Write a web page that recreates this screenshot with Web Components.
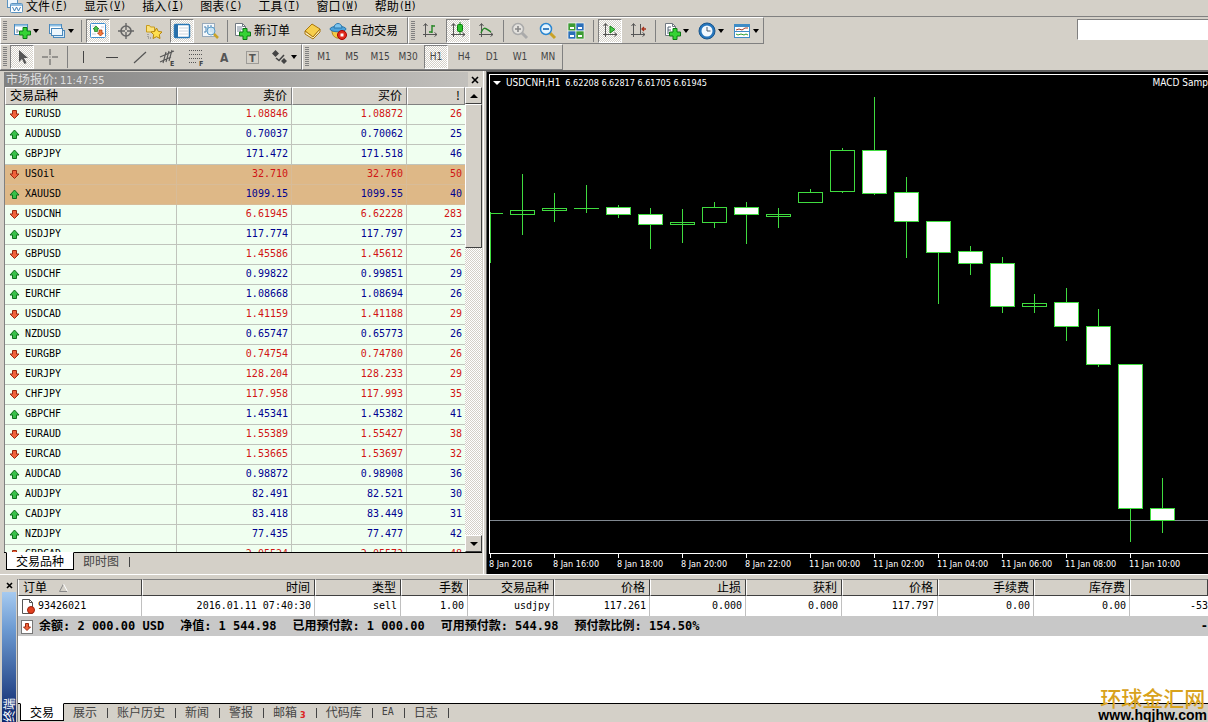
<!DOCTYPE html>
<html lang="zh-CN">
<head>
<meta charset="utf-8">
<title>交易终端</title>
<style>
  html, body { margin: 0; height: 100%; }
  body {
    --face: #d4d0c8; --shade: #808080; --dark: #404040; --light: #ffffff;
    --dither: repeating-conic-gradient(#ffffff 0 25%, #d4d0c8 0 50%) 0 0 / 2px 2px;
    --ui: "DejaVu Sans Condensed", "Noto Sans", "Noto Sans CJK SC", sans-serif;
    --mono: "DejaVu Sans Mono", "Noto Sans CJK SC", monospace;
    --cjk: "Noto Sans CJK SC", sans-serif;
    background: var(--face); color: #000; font: 12px/16px var(--cjk); overflow: hidden;
  }
</style>
</head>
<body>
<trade-app></trade-app>
<script>
const reset = `:host,*{box-sizing:border-box} button{font:inherit;color:inherit;background:none;border:0;padding:0;margin:0;white-space:nowrap}
 table{border-collapse:separate;border-spacing:0;table-layout:fixed;width:100%} th{font-weight:400} th,td{vertical-align:top}`;

const doc = '<path d="M2.5 1.5h7l3 3v9h-10z" fill="#fff" stroke="#707880"/><path d="M9.500 1.500v3h3" fill="none" stroke="#707880"/>';
const plus = (x, y) => `<path transform="translate(${x} ${y})" d="M4 .5h4v3.500h3.500v4H8v3.500H4V8H.5V4H4z" fill="#35d335" stroke="#0a7a12"/>`;
const axes = '<path d="M4.500 2v13M2 12.500h14M2.500 4l2-2.500 2 2.500M13.500 10.500l2.500 2-2.500 2" fill="none" stroke="#555"/>';
const glass = (c, s) => `<path d="M11 11l5 5" stroke="${c === '#aaa' ? '#aaa' : '#c9a227'}" stroke-width="3"/><circle cx="7" cy="7" r="5.500" fill="${c === '#aaa' ? '#e4e2de' : '#e6f5ff'}" stroke="${c}" stroke-width="1.500"/><path d="${s}" stroke="${c === '#aaa' ? '#888' : '#1565b0'}" stroke-width="1.600"/>`;
const ICONS = {
  app: '<rect x="1.500" y="-1.500" width="10" height="9" fill="#eef6fc" stroke="#5b93c0"/><rect x="4.500" y="3.500" width="12" height="9" rx="1" fill="#fff" stroke="#5b93c0"/><path d="M5 5h11" stroke="#8fbce0" stroke-width="2"/><path d="M6.500 7l2 4 2-4 2 4 2-4" fill="none" stroke="#3f7fb5"/>',
  newchart: '<rect x="1.500" y="2.500" width="13" height="10" fill="#fff" stroke="#4a88bb"/><path d="M2 3.500h12" stroke="#8fc0e4" stroke-width="2"/><path d="M4 7v4M4 9h2" stroke="#789"/>' + plus(6, 5),
  profiles: '<rect x="1.500" y="2.500" width="12" height="9" fill="#fff" stroke="#4a88bb"/><path d="M2 3.500h11" stroke="#8fc0e4" stroke-width="2"/><rect x="5.500" y="8.500" width="11" height="7" fill="#d9ecfa" stroke="#4a88bb"/><path d="M3 7h9" stroke="#9ab" /><rect x="3.500" y="6.500" width="11" height="7" fill="#eef7fd" stroke="#4a88bb"/>',
  market: '<rect x="1.500" y="1.500" width="15" height="14" rx="1" fill="#fff" stroke="#3f8fd0"/><path d="M3 4h4M3 12h4M12 5h3" stroke="#ccd" /><path d="M7 4l3 3H8.500v2.500h-3V7H4z" fill="#49c149" stroke="#167a16" stroke-width=".7"/><path d="M11.500 14l-3-3H10V8h3v3h1.500z" fill="#f47a3a" stroke="#a83208" stroke-width=".7"/>',
  target: '<circle cx="9" cy="9" r="5" fill="none" stroke="#666" stroke-width="1.600"/><path d="M9 1v7M9 10v7M1 9h7M10 9h7" stroke="#666" stroke-width="1.400"/>',
  navigator: '<path d="M1.500 3.500h3l1 1.500h4v5h-8z" fill="#fce27a" stroke="#c79b1c"/><path d="M3 12v4h4" fill="none" stroke="#777" stroke-dasharray="1 1"/><path d="M11.500 6l1.800 3.400 3.700.6-2.700 2.700.7 3.800-3.500-1.800L8 16.500l.7-3.800L6 10l3.700-.6z" fill="#ffdf4f" stroke="#b8860b"/>',
  terminal: '<rect x="1.500" y="2.500" width="15" height="13" rx="1" fill="#fff" stroke="#2877b5" stroke-width="1.500"/><path d="M3.500 3v12" stroke="#2a6fa8" stroke-width="3"/><path d="M6 6h9M6 9h9M6 12h9" stroke="#ccd4dc"/>',
  tester: '<rect x="1.500" y="1.500" width="12" height="13" fill="#f4f8fb" stroke="#9ab"/><path d="M3 5h2v5H3M7 3v8M10 3v7M12 5v7" fill="none" stroke="#4a84b4"/><circle cx="10" cy="9" r="4" fill="#d6ecfa" fill-opacity=".8" stroke="#5b9cc8"/><path d="M13 12l4 4" stroke="#c9a227" stroke-width="2.500"/>',
  neworder: doc + '<path d="M4 5h5M4 7h6M4 9h4" stroke="#789"/>' + plus(6, 6),
  book: '<path d="M2 9l7-7 8 5-7 8z" fill="#f7cf4d" stroke="#a9760c"/><path d="M2 9v3l8 5 7-7V7l-7 8z" fill="#fdf0bd" stroke="#a9760c"/>',
  auto: '<path d="M3 9c0 5 4 8 8 7l5-7z" fill="#f3ca45" stroke="#b0841b"/><ellipse cx="9" cy="7" rx="8" ry="2.800" fill="#4da3db" stroke="#2b78ad"/><path d="M5 6c0-6 8-6 8 0z" fill="#7cc4ee" stroke="#2b78ad"/><circle cx="13" cy="13" r="4.500" fill="#e02a1c" stroke="#a00"/><rect x="11.500" y="11.500" width="3" height="3" fill="#fff"/>',
  bars: axes + '<path d="M11 3v8M11 4h3M8 10h3" stroke="#268626" stroke-width="1.400"/>',
  candles: axes + '<path d="M11 0v12" stroke="#168c16"/><rect x="8.500" y="2.500" width="5" height="7" rx="1" fill="#2cc32c" stroke="#0d7d0d"/>',
  line: axes + '<path d="M4 11c3-8 5-4 10-1" fill="none" stroke="#268626" stroke-width="1.400"/>',
  zoomin: glass('#aaa', 'M4 7h6M7 4v6'),
  zoomout: glass('#2b86d0', 'M4 7h6'),
  tile: '<g stroke="#fff" stroke-width=".6"><rect x="1" y="1" width="8" height="8" fill="#3d9b33"/><rect x="9" y="1" width="8" height="8" fill="#2b6fb8"/><rect x="1" y="9" width="8" height="8" fill="#2b6fb8"/><rect x="9" y="9" width="8" height="8" fill="#3d9b33"/></g><path d="M3 5h4v2H3zM11 5h4v2h-4zM3 13h4v2H3zM11 13h4v2h-4z" fill="#fff"/>',
  scroll: axes + '<path d="M9 4l5 3.500L9 11z" fill="#48cc48" stroke="#168016"/>',
  shift: axes + '<path d="M11.500 2v11" stroke="#555"/><path d="M17 7h-4M15 5l-2 2 2 2" fill="none" stroke="#a8321c" stroke-width="1.300"/>',
  indicator: doc + '<path d="M5 12V5h3M5 8h3" fill="none" stroke="#567"/>' + plus(6, 6),
  clock: '<circle cx="9" cy="9" r="8" fill="#2676bd" stroke="#1a568c"/><circle cx="9" cy="9" r="5.500" fill="#f2f9ff"/><path d="M9 5v4h3.500" fill="none" stroke="#456"/>',
  template: '<rect x="1" y="2" width="16" height="14" fill="#3e8cc6"/><path d="M2 5h14v4H2zM2 10h14v5H2z" fill="#fff"/><path d="M3 8l3-1 3 1 3-2 3 0" fill="none" stroke="#a33b22"/><path d="M3 12l2 1 3-1 3 1 2-1 2 1" fill="none" stroke="#2d9b2d"/>',
  cursor: '<path d="M6 2v12l3-3 2.500 5 2-1-2.500-5h4z" fill="#555"/>',
  cross: '<path d="M9 1v6M9 11v6M1 9h6M11 9h6M9 8.500v1" stroke="#555"/>',
  vline: '<path d="M8.500 3v12" stroke="#444"/>',
  hline: '<path d="M3 9.500h12" stroke="#444"/>',
  trend: '<path d="M3 15L15 4" stroke="#555" stroke-width="1.200"/>',
  channel: '<path d="M1 9l14-6M1 14l11-5M4 15l3-11M7 14l3-11M10 13l3-11" stroke="#555" stroke-width="1.100"/><text x="11" y="18" font-size="7" font-weight="700" fill="#444">E</text>',
  fibo: '<path d="M2 2.500h14M2 6.500h14M2 10.500h14M2 14.500h8" stroke="#555" stroke-dasharray="1 1"/><text x="12" y="18" font-size="7" font-weight="700" fill="#444">F</text>',
  text: '<text x="5" y="14" font-size="12" font-weight="700" fill="#555">A</text>',
  label: '<rect x="3.500" y="3.500" width="12" height="12" fill="none" stroke="#666" stroke-dasharray="1 1"/><text x="6" y="14" font-size="11" font-weight="700" fill="#555">T</text>',
  arrows: '<path d="M4.500 2l3.500 3.500-3.500 3.500L1 5.500zM13 16l-3-3 3-3 3 3z" fill="#444"/><path d="M5 10l3 2.500L13 7" fill="none" stroke="#444" stroke-width="1.600"/>',
  down: '<path d="M3.500 1.500h4V5h2.500L5.500 9.500 1 5h2.500z" fill="#f0623a" stroke="#9c2a10"/>',
  up: '<path d="M3.500 9.500h4V6h2.500L5.500 1 1 6h2.500z" fill="#38c048" stroke="#0e6e1c"/>',
  order: '<path d="M1.500.5h7l3 3v11h-10z" fill="#fff" stroke="#555"/><path d="M8.500.5v3h3" fill="none" stroke="#555"/><circle cx="10" cy="11" r="3.500" fill="#e2401f" stroke="#9c2410"/>',
  balance: '<rect x=".5" y="1.500" width="11" height="13" fill="#fff" stroke="#777"/><path d="M4.500 4.500h3V8h2L6 11.500 2.500 8h2z" fill="#f0623a" stroke="#9c2a10"/>'
};
const svg = (name, w = 18, h = 18) => `<svg width="${w}" height="${h}" viewBox="0 0 ${w} ${h}" aria-hidden="true">${ICONS[name]}</svg>`;

function define(name, build, after) {
  customElements.define(name, class extends HTMLElement {
    connectedCallback() {
      if (this.shadowRoot) return;
      const t = document.createElement('template');
      t.innerHTML = build(this);
      this.attachShadow({ mode: 'open' }).append(t.content.cloneNode(true));
      if (after) after(this, this.shadowRoot);
    }
  });
}

/* Toolbar button: icon and/or slotted caption, optional drop arrow */
define('tool-button', el => `<style>${reset}
  :host{display:block;flex:none}
  button{display:flex;align-items:center;justify-content:center;gap:3px;height:24px;min-width:24px;margin:0 2px;border:1px solid transparent;
    font-size:12px;font-family:var(--ui)}
  :host([pressed]) button{background:var(--dither);border-color:var(--shade) var(--light) var(--light) var(--shade)}
  :host([menu]) button{width:31px;gap:2px}
  :host([caption]) button{padding-right:5px}
  :host([period]) button{font-size:10px;color:#444}
  svg{display:block;font-family:var(--ui)} .arrow{border:3px solid transparent;border-top:4px solid #000;border-bottom:0}
  </style><button type="button" title="${el.title || el.getAttribute('icon') || ''}">${el.hasAttribute('icon') ? svg(el.getAttribute('icon')) : ''}<slot></slot>${el.hasAttribute('menu') ? '<i class="arrow"></i>' : ''}</button>`);

define('tool-bar', () => `<style>${reset}
  :host{display:flex;align-items:center;flex:none;height:100%;border:1px solid;border-color:var(--light) var(--shade) var(--shade) var(--light)}
  .grip{width:4px;height:20px;margin:0 1px 0 2px;background:repeating-linear-gradient(var(--shade) 0 1px,var(--face) 1px 2px)}
  ::slotted(hr){width:1px;height:22px;margin:0 2px 0 3px;border:0;background:var(--shade)}
  </style><span class="grip"></span><slot></slot>`);

define('menu-bar', () => `<style>${reset}
  :host{display:flex;height:17px;padding-left:6px;border-bottom:1px solid var(--shade)}
  svg{flex:none;margin-right:2px;height:14px} nav{display:flex;gap:16px;align-items:flex-start}
  button{display:flex;align-items:center;height:12px;line-height:12px;flex:none} span{font-family:var(--mono);font-size:10px}
  </style>${svg('app', 18, 14)}<nav>${[['文件', 'F'], ['显示', 'V'], ['插入', 'I'], ['图表', 'C'], ['工具', 'T'], ['窗口', 'W'], ['帮助', 'H']]
    .map(([t, k]) => `<button type="button">${t}<span>(<u>${k}</u>)</span></button>`).join('')}</nav>`);

define('tool-rows', () => {
  const b = (i, x = '', t = '') => `<tool-button icon="${i}" ${x}>${t}</tool-button>`;
  return `<style>${reset}
  :host{display:block;border-bottom:1px solid #606060}
  .row{display:flex;height:27px} .row+.row{height:26px}
  input{width:131px;height:21px;margin:2px 0 0 auto;background:#fff;border:1px solid;border-color:var(--shade) #fff #fff var(--shade);border-right:0;padding:0 4px;font:12px var(--cjk);outline:0}
  .first{width:408px}
  </style>
  <div class="row"><tool-bar class="first">${b('newchart', 'menu')}${b('profiles', 'menu')}<hr>${b('market', 'pressed')}${b('target')}${b('navigator')}${b('terminal', 'pressed')}${b('tester')}<hr>${b('neworder', 'caption', '新订单')}${b('book')}${b('auto', 'caption', '自动交易')}</tool-bar>
  <tool-bar>${b('bars')}${b('candles', 'pressed')}${b('line')}<hr>${b('zoomin')}${b('zoomout')}${b('tile')}<hr>${b('scroll', 'pressed')}${b('shift')}<hr>${b('indicator', 'menu')}${b('clock', 'menu')}${b('template', 'menu')}</tool-bar>
  <input type="search" aria-label="搜索"></div>
  <div class="row"><tool-bar>${b('cursor', 'pressed')}${b('cross')}<hr>${['vline', 'hline', 'trend', 'channel', 'fibo', 'text', 'label'].map(i => b(i)).join('')}${b('arrows', 'menu')}</tool-bar>
  <tool-bar>${['M1', 'M5', 'M15', 'M30', 'H1', 'H4', 'D1', 'W1', 'MN'].map(p => `<tool-button period title="${p}" ${p === 'H1' ? 'pressed' : ''}>${p}</tool-button>`).join('')}</tool-bar></div>`;
});

/* Strip of sheet tabs under a panel */
define('tab-strip', el => `<style>${reset}
  :host{display:flex;flex:none;height:20px;border-top:1px solid #000;background:var(--face);padding-left:2px;color:#444}
  button{display:flex;align-items:center;height:16px;padding-left:9px}
  button::after{content:"";width:1px;height:10px;background:#444;margin:2px 0 0 10px}
  .on{background:#fff;color:#000;height:18px;padding:0 9px;margin-top:-1px;border:1px solid #000;border-top-color:#fff}
  .on::after{content:none}
  .latin{font-family:var(--mono);font-size:10px} sub{font:700 9px/10px var(--ui);color:#d22;align-self:flex-end;margin-left:3px;vertical-align:baseline}
  </style>${el.getAttribute('tabs').split(',').map((t, i) => {
    const [name, badge] = t.split('/');
    return `<button type="button" class="${i ? '' : 'on'} ${/^[A-Z]+$/.test(name) ? 'latin' : ''}">${name}${badge ? `<sub>${badge}</sub>` : ''}</button>`;
  }).join('')}`);

const QUOTES = `-EURUSD 1.08846 1.08872 26
+AUDUSD 0.70037 0.70062 25
+GBPJPY 171.472 171.518 46
-USOil 32.710 32.760 50
+XAUUSD 1099.15 1099.55 40
-USDCNH 6.61945 6.62228 283
+USDJPY 117.774 117.797 23
-GBPUSD 1.45586 1.45612 26
+USDCHF 0.99822 0.99851 29
+EURCHF 1.08668 1.08694 26
-USDCAD 1.41159 1.41188 29
+NZDUSD 0.65747 0.65773 26
-EURGBP 0.74754 0.74780 26
-EURJPY 128.204 128.233 29
-CHFJPY 117.958 117.993 35
+GBPCHF 1.45341 1.45382 41
-EURAUD 1.55389 1.55427 38
-EURCAD 1.53665 1.53697 32
+AUDCAD 0.98872 0.98908 36
+AUDJPY 82.491 82.521 30
+CADJPY 83.418 83.449 31
+NZDJPY 77.435 77.477 42
-GBPCAD 2.05524 2.05572 48`.split('\n').map(r => [r[0], ...r.slice(1).split(' ')]);

define('market-watch', () => `<style>${reset}
  :host{display:flex;flex-direction:column;flex:none;width:484px;padding:1px 1px 2px 4px;border-right:1px solid #fff}
  header{display:flex;height:15px;flex:none;background:linear-gradient(90deg,#808080,#c4c2be);color:#dedede;line-height:14px}
  header span{flex:1;padding-left:2px} time{font:11px/14px var(--ui)}
  header button{width:14px;background:var(--face);color:#000;display:grid;place-items:center}
  .list{flex:1;min-height:0;display:flex;border-left:1px solid var(--shade);background:honeydew}
  .view{flex:1;overflow:hidden}
  th{height:18px;line-height:14px;padding:0 4px;background:var(--face);text-align:right;border:1px solid;border-color:#fff var(--shade) var(--shade) #fff}
  th:first-child{text-align:left}
  tbody{font:10px/18px var(--mono)}
  tbody td{height:20px;padding:0 3px;text-align:right;border-right:1px solid #c0c4bc;border-bottom:1px solid #c0c4bc;color:#000090}
  tbody tr td:last-child{border-right:0}
  tbody .dn td{color:#d01414} tbody td.name{color:#000;text-align:left;padding-left:4px}
  .hot{background:burlywood} .hot td{border-color:#d8bc98}
  .name svg{vertical-align:middle;margin-right:5px}
  .bar{width:17px;flex:none;display:flex;flex-direction:column;background:var(--dither)}
  .bar button,.thumb{background:var(--face);border:1px solid;border-color:#fff var(--dark) var(--dark) #fff}
  .bar button{height:17px;display:grid;place-items:center;flex:none} .thumb{height:144px}
  .bar button:last-child{margin-top:auto}
  </style>
  <header><span>市场报价: <time>11:47:55</time></span><button type="button" aria-label="关闭"><svg width="8" height="8"><path d="M1 1l6 6M7 1L1 7" stroke="#000" stroke-width="1.600"/></svg></button></header>
  <div class="list"><div class="view"><table><colgroup><col style="width:172px"><col style="width:115px"><col style="width:115px"><col></colgroup>
  <thead><tr><th>交易品种</th><th>卖价</th><th>买价</th><th>!</th></tr></thead>
  <tbody>${QUOTES.map(([d, n, a, b, s], i) => `<tr class="${d === '-' ? 'dn' : ''} ${i === 3 || i === 4 ? 'hot' : ''}"><td class="name">${svg(d === '-' ? 'down' : 'up', 11, 11)}${n}</td><td>${a}</td><td>${b}</td><td>${s}</td></tr>`).join('')}</tbody></table></div>
  <div class="bar"><button type="button" aria-label="向上"><svg width="8" height="4"><path d="M0 4l4-4 4 4z"/></svg></button><div class="thumb"></div><button type="button" aria-label="向下"><svg width="8" height="4"><path d="M0 0l4 4 4-4z"/></svg></button></div></div>
  <tab-strip tabs="交易品种,即时图"></tab-strip>`);

/* Candles: high, low, body top, body bottom, falling; plot starts 91px down the window, one candle per 32px */
const CANDLES = [[174,235,210,214,0],[193,222,208,210,0],[185,213,208,208,0],[205,218,207,214,1],[208,249,214,224,1],[209,243,222,224,0],[202,228,207,222,0],[202,244,207,214,1],[208,228,214,216,0],[189,202,192,202,0],[148,193,150,191,0],[97,195,150,193,1],[177,258,192,221,1],[221,304,221,252,1],[246,275,251,263,1],[257,313,263,306,1],[294,313,303,306,0],[288,341,302,326,1],[309,367,326,364,1],[364,542,364,508,1],[478,533,508,520,1]];
define('price-chart', () => `<style>${reset}
  :host{display:flex;flex-direction:column;flex:1;min-width:0;background:#000;color:#fff;margin-left:2px;padding:2px 0 0 2px;border-top:1px solid #606060;border-left:1px solid #606060;font:9px/16px var(--ui)}
  .plot{flex:1;min-height:0;display:flex;flex-direction:column;border:1px solid #fff;border-right:0}
  header{display:flex;align-items:center;height:16px;flex:none;padding-left:3px;white-space:nowrap;gap:5px}
  header i{border:4px solid transparent;border-top-color:#fff;border-bottom:0} .name,.ea{font-size:10px} .ea{margin-left:auto}
  .canvas{flex:1;width:100%;min-height:0;display:block}
  footer{display:flex;height:20px;flex:none;overflow:hidden;white-space:nowrap}
  footer span{flex:none;width:64px;line-height:14px}
  footer span::before{content:"";display:block;width:1px;height:4px;margin:0 0 -1px 1px;background:#fff}
  </style><div class="plot"><header><i></i><span class="name">USDCNH,H1</span><span>6.62208 6.62817 6.61705 6.61945</span><span class="ea">MACD Samp</span></header>
  <svg class="canvas" shape-rendering="crispEdges" role="img" aria-label="USDCNH,H1"><g transform="translate(-490 -91)" stroke="#3fdc3f">
  <path d="M490 520.500H5000" stroke="#808890"/>
  <path d="M490.500 212V263M490 213.500H503"/>
  ${CANDLES.map(([h, l, t, b, f], i) => { const x = 522 + i * 32; return `<path d="M${x + .5} ${h}V${l}"/>` + (b > t ? `<rect x="${x - 11.5}" y="${t + .5}" width="24" height="${b - t}" fill="${f ? '#fff' : '#000'}"/>` : `<path d="M${x - 12} ${t + .5}h25"/>`) + (b - t < 5 && !f ? `<path d="M${x + .5} ${t}V${b}"/>` : ''); }).join('')}
  </g></svg></div>
  <footer>${['8 Jan 2016', '8 Jan 16:00', '8 Jan 18:00', '8 Jan 20:00', '8 Jan 22:00', '11 Jan 00:00', '11 Jan 02:00', '11 Jan 04:00', '11 Jan 06:00', '11 Jan 08:00', '11 Jan 10:00'].map(t => `<span>${t}</span>`).join('')}</footer>`);

const COLS = [['订单', '93426021', 125], ['时间', '2016.01.11 07:40:30', 173], ['类型', 'sell', 86], ['手数', '1.00', 67], ['交易品种', 'usdjpy', 86], ['价格', '117.261', 96], ['止损', '0.000', 96], ['获利', '0.000', 96], ['价格', '117.797', 96], ['手续费', '0.00', 96], ['库存费', '0.00', 96], ['', '-53', 0]];
define('trade-terminal', () => `<style>${reset}
  :host{display:flex;flex:none;height:148px;padding-top:4px;border-top:1px solid #fff;background:var(--face)}
  aside{width:17px;flex:none;display:flex;flex-direction:column;padding:0 1px 0 2px}
  aside button{height:13px;display:grid;place-items:center}
  aside div{flex:1;display:flex;align-items:center;background:linear-gradient(#a6caf0,#6a98d0 30%,#0a246a);color:#fff}
  aside span{writing-mode:vertical-rl;text-orientation:sideways;transform:rotate(180deg);font-size:12px;line-height:14px;align-self:flex-end}
  main{flex:1;min-width:0;display:flex;flex-direction:column;background:#fff;border-left:1px solid var(--shade)}
  th{height:17px;line-height:14px;padding:0 4px;text-align:right;background:var(--face);border:1px solid;border-color:var(--shade) var(--dark) var(--dark) #fff}
  th:first-child{text-align:left} th svg{margin-left:12px}
  td{height:20px;padding:0 3px;text-align:right;font:10px/20px var(--mono);border-right:1px solid #c0c0c0;white-space:nowrap}
  td:first-child{text-align:left;padding-left:3px} td:last-child{padding-right:0;border:0}
  td svg{vertical-align:middle;margin-right:3px}
  tfoot td{background:#c8c8c8;font:700 12px/20px var(--mono);border:0}
  tfoot div{display:flex;align-items:center;gap:16px} tfoot svg{margin-right:-10px}
  tab-strip{margin-top:auto;height:19px}
  </style>
  <aside><button type="button" aria-label="关闭"><svg width="7" height="7"><path d="M1 1l5 5M6 1L1 6" stroke="#000" stroke-width="1.600"/></svg></button><div><span>终端</span></div></aside>
  <main><table><colgroup>${COLS.map(c => `<col${c[2] ? ` style="width:${c[2] - (c[0] === '订单' ? 1 : 0)}px"` : ''}>`).join('')}</colgroup>
  <thead><tr>${COLS.map((c, i) => `<th>${c[0]}${i ? '' : '<svg width="9" height="8"><path d="M4.500 0L.5 7.500h8" fill="none" stroke="#888"/><path d="M4.500 0l4 7.500" stroke="#fff"/></svg>'}</th>`).join('')}</tr></thead>
  <tbody><tr>${COLS.map((c, i) => `<td>${i ? '' : svg('order', 14, 15)}${c[1]}</td>`).join('')}</tr></tbody>
  <tfoot><tr><td colspan="11"><div>${svg('balance', 12, 15)}<span>余额: 2 000.00 USD</span><span>净值: 1 544.98</span><span>已用预付款: 1 000.00</span><span>可用预付款: 544.98</span><span>预付款比例: 154.50%</span></div></td><td>-</td></tr></tfoot></table>
  <tab-strip tabs="交易,展示,账户历史,新闻,警报,邮箱/3,代码库,EA,日志"></tab-strip></main>`);

define('site-mark', () => `<style>
  :host{position:absolute;right:1px;bottom:0;text-align:center}
  b{display:block;font:700 14px/14px "Liberation Sans",sans-serif;color:#000} span{display:block;font:500 21px/21px var(--cjk);color:#d8a21c}
  </style><span>环球金汇网</span><b>www.hqjhw.com</b>`);

define('trade-app', () => `<style>
  :host{display:flex;flex-direction:column;height:100vh;position:relative;overflow:hidden}
  menu-bar,tool-rows{flex:none} .work{flex:1;min-height:0;display:flex}
  </style><menu-bar></menu-bar><tool-rows></tool-rows><div class="work"><market-watch></market-watch><price-chart></price-chart></div><trade-terminal></trade-terminal><site-mark></site-mark>`);
</script>
</body>
</html>
